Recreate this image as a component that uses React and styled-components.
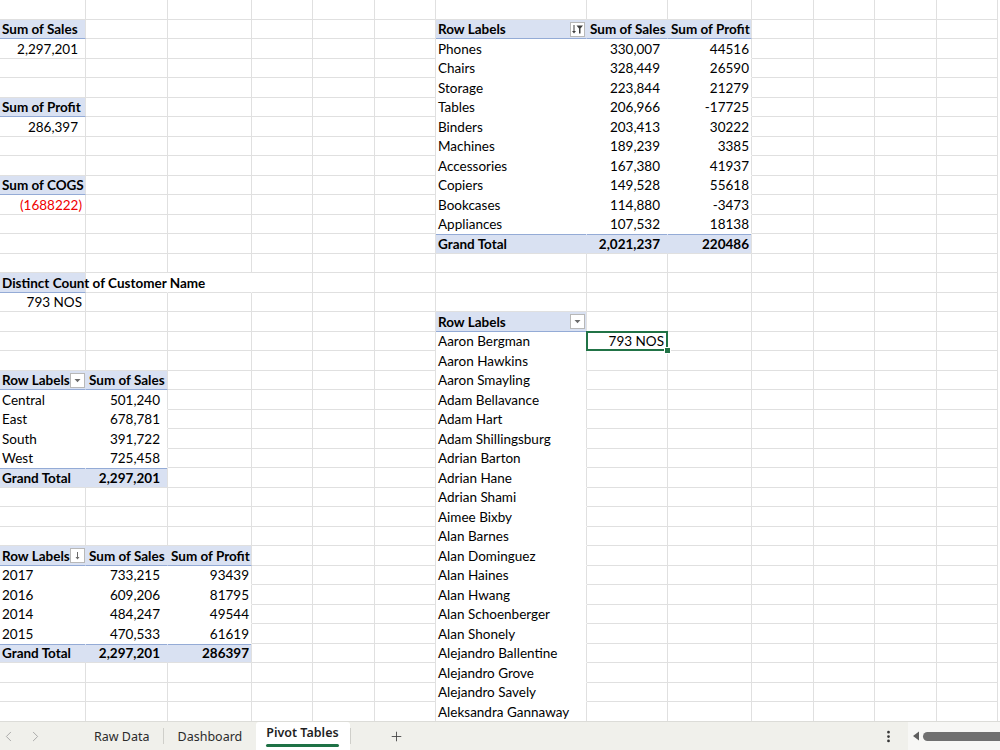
import React from "react";
import styled, { createGlobalStyle } from "styled-components";
import { ChevronLeft, ChevronRight, Plus, EllipsisVertical } from "lucide-react";

const COLS = [86, 82, 84, 61, 62, 61, 151, 81, 84, 62, 61, 62, 61];
const ROWS = 37;
const GRID = "#e0e0e0";
const FILL = "#d9e1f2";
const RULE = "#94abd6";

const GlobalStyle = createGlobalStyle`
  body {
    margin: 0;
    overflow: hidden;
    background: #fff;
    font-family: Lato, "Liberation Sans", sans-serif;
  }
`;

// cell helpers
const head = (t, o = {}) => ({ t, k: "head", ...o });
const body = (t, o = {}) => ({ t, k: "body", ...o });
const num = (t, o = {}) => ({ t, k: "body", a: "r", pr: 7, ...o });
const total = (t, o = {}) => ({ t, k: "total", ...o });

const names = [
  "Aaron Bergman",
  "Aaron Hawkins",
  "Aaron Smayling",
  "Adam Bellavance",
  "Adam Hart",
  "Adam Shillingsburg",
  "Adrian Barton",
  "Adrian Hane",
  "Adrian Shami",
  "Aimee Bixby",
  "Alan Barnes",
  "Alan Dominguez",
  "Alan Haines",
  "Alan Hwang",
  "Alan Schoenberger",
  "Alan Shonely",
  "Alejandro Ballentine",
  "Alejandro Grove",
  "Alejandro Savely",
  "Aleksandra Gannaway",
];

const categories = [
  ["Phones", "330,007", "44516"],
  ["Chairs", "328,449", "26590"],
  ["Storage", "223,844", "21279"],
  ["Tables", "206,966", "-17725"],
  ["Binders", "203,413", "30222"],
  ["Machines", "189,239", "3385"],
  ["Accessories", "167,380", "41937"],
  ["Copiers", "149,528", "55618"],
  ["Bookcases", "114,880", "-3473"],
  ["Appliances", "107,532", "18138"],
];

const regions = [
  ["Central", "501,240"],
  ["East", "678,781"],
  ["South", "391,722"],
  ["West", "725,458"],
];

const years = [
  ["2017", "733,215", "93439"],
  ["2016", "609,206", "81795"],
  ["2014", "484,247", "49544"],
  ["2015", "470,533", "61619"],
];

function buildSheet() {
  const rows = Array.from({ length: ROWS }, () => ({}));

  // single value pivots
  rows[1][0] = head("Sum of Sales", { edge: true });
  rows[2][0] = num("2,297,201", { edge: true, foot: true });
  rows[5][0] = head("Sum of Profit", { edge: true });
  rows[6][0] = num("286,397", { edge: true, foot: true });
  rows[9][0] = head("Sum of COGS", { edge: true });
  rows[10][0] = body("(1688222)", { a: "r", pr: 3, red: true, edge: true, foot: true });
  rows[14][0] = head("Distinct Count of Customer Name", { edge: true });
  rows[14][1] = { open: true };
  rows[14][2] = { open: true };
  rows[15][0] = body("793 NOS", { a: "r", pr: 3, edge: true, foot: true });

  // category pivot
  rows[1][6] = head("Row Labels", { icon: "sortFilter" });
  rows[1][7] = head("Sum of Sales", { pl: 3 });
  rows[1][8] = head("Sum of Profit", { pl: 3, edge: true });
  categories.forEach(([c, s, p], i) => {
    rows[2 + i][6] = body(c);
    rows[2 + i][7] = num(s);
    rows[2 + i][8] = body(p, { a: "r", edge: true });
  });
  rows[12][6] = total("Grand Total");
  rows[12][7] = total("2,021,237", { a: "r", pr: 7 });
  rows[12][8] = total("220486", { a: "r", edge: true });

  // customer list
  rows[16][6] = head("Row Labels", { icon: "drop", edge: true });
  names.forEach((n, i) => {
    rows[17 + i][6] = body(n, { edge: true });
  });
  rows[17][7] = { t: "793 NOS", a: "r", pr: 3, sel: true };

  // region pivot
  rows[19][0] = head("Row Labels", { icon: "drop" });
  rows[19][1] = head("Sum of Sales", { pl: 3, edge: true });
  regions.forEach(([r, s], i) => {
    rows[20 + i][0] = body(r);
    rows[20 + i][1] = num(s, { edge: true });
  });
  rows[24][0] = total("Grand Total");
  rows[24][1] = total("2,297,201", { a: "r", pr: 7, edge: true });

  // year pivot
  rows[28][0] = head("Row Labels", { icon: "sort" });
  rows[28][1] = head("Sum of Sales", { pl: 3 });
  rows[28][2] = head("Sum of Profit", { pl: 3, edge: true });
  years.forEach(([y, s, p], i) => {
    rows[29 + i][0] = body(y);
    rows[29 + i][1] = num(s);
    rows[29 + i][2] = body(p, { a: "r", edge: true });
  });
  rows[33][0] = total("Grand Total");
  rows[33][1] = total("2,297,201", { a: "r", pr: 7 });
  rows[33][2] = total("286397", { a: "r", edge: true });

  return rows;
}

function FieldButton({ kind }) {
  return (
    <Btn>
      <svg width="13" height="13" viewBox="0 0 13 13">
        {kind === "drop" && <path d="M3.5 5h6l-3 3.2z" fill="#6b6b6b" />}
        {kind === "sort" && (
          <g fill="#6b6b6b">
            <rect x="6" y="3" width="1" height="6" />
            <path d="M4.5 8h4l-2 2.5z" />
          </g>
        )}
        {kind === "sortFilter" && (
          <g fill="#404040">
            <rect x="2.5" y="2" width="1" height="7" />
            <path d="M1 8h4l-2 2.5z" />
            <path d="M5.5 2.5h6.5l-2.5 3v5h-1.5v-5z" />
          </g>
        )}
      </svg>
    </Btn>
  );
}

function SheetGrid() {
  const rows = buildSheet();
  return (
    <Grid>
      {rows.map((row, r) =>
        COLS.map((_, c) => {
          const cell = row[c] || {};
          return (
            <Cell
              key={`${r}-${c}`}
              $kind={cell.k || "plain"}
              $align={cell.a}
              $pr={cell.pr}
              $pl={cell.pl}
              $edge={cell.edge}
              $foot={cell.foot}
              $open={cell.open}
              $red={cell.red}
              $sel={cell.sel}
            >
              {cell.t && <span>{cell.t}</span>}
              {cell.icon && <FieldButton kind={cell.icon} />}
            </Cell>
          );
        })
      )}
    </Grid>
  );
}

function SheetTabs() {
  return (
    <TabBar>
      <Nav>
        <ChevronLeft size={17} strokeWidth={1.3} />
        <ChevronRight size={17} strokeWidth={1.3} />
      </Nav>
      <Tab>Raw Data</Tab>
      <Sep />
      <Tab>Dashboard</Tab>
      <ActiveTab>
        <span>Pivot Tables</span>
        <Underline />
      </ActiveTab>
      <Sep />
      <AddTab>
        <Plus size={15} strokeWidth={1.4} />
      </AddTab>
      <Spacer />
      <Kebab>
        <EllipsisVertical size={15} strokeWidth={2.4} />
      </Kebab>
      <Scroll>
        <svg width="8" height="10" viewBox="0 0 8 10">
          <path d="M1 5l6-4.5v9z" fill="#5f5f5f" />
        </svg>
        <Thumb />
      </Scroll>
    </TabBar>
  );
}

export default function App() {
  return (
    <>
      <GlobalStyle />
      <Page>
        <Sheet>
          <SheetGrid />
        </Sheet>
        <SheetTabs />
      </Page>
    </>
  );
}

const Page = styled.div`
  width: 1000px;
  height: 750px;
  display: flex;
  flex-direction: column;
  overflow: hidden;
`;

const Sheet = styled.div`
  height: 721px;
  overflow: hidden;
  flex: none;
`;

const Grid = styled.div`
  display: grid;
  grid-template-columns: ${COLS.map((w) => `${w}px`).join(" ")};
  grid-auto-rows: 19.5px;
`;

const Cell = styled.div`
  box-sizing: border-box;
  position: relative;
  display: flex;
  align-items: center;
  justify-content: ${(p) => (p.$align === "r" ? "flex-end" : "space-between")};
  padding: 1px ${(p) => p.$pr ?? 2}px 0 ${(p) => p.$pl ?? 2}px;
  font-size: 13.5px;
  white-space: nowrap;
  min-width: 0;
  color: ${(p) => (p.$red ? "#f00000" : "#000")};
  font-weight: ${(p) => (p.$kind === "head" || p.$kind === "total" ? 700 : 400)};
  background: ${(p) =>
    p.$kind === "head" || p.$kind === "total"
      ? FILL
      : p.$kind === "body"
      ? "#fff"
      : "transparent"};
  border-right: 1px solid
    ${(p) =>
      p.$edge
        ? GRID
        : p.$open
        ? "transparent"
        : p.$kind === "body"
        ? "#fff"
        : p.$kind === "head" || p.$kind === "total"
        ? FILL
        : GRID};
  border-bottom: 1px solid
    ${(p) =>
      p.$kind === "head"
        ? RULE
        : p.$kind === "body" && !p.$foot
        ? "#fff"
        : GRID};
  ${(p) => p.$kind === "total" && `box-shadow: inset 0 1px 0 ${RULE};`}
  ${(p) => p.$kind === "head" && p.$align !== "r" && "padding-right: 1px;"}

  ${(p) =>
    p.$sel &&
    `
    z-index: 2;
    &::after {
      content: "";
      position: absolute;
      left: -1px;
      top: -1px;
      right: -1px;
      bottom: -1px;
      border: 2px solid #217346;
    }
    &::before {
      content: "";
      position: absolute;
      right: -4px;
      bottom: -4px;
      width: 5px;
      height: 5px;
      background: #217346;
      border: 1px solid #fff;
      z-index: 1;
    }
  `}
`;

const Btn = styled.span`
  box-sizing: border-box;
  width: 15px;
  height: 15px;
  flex: none;
  display: inline-flex;
  align-items: center;
  justify-content: center;
  background: #fff;
  border: 1px solid #b8b8b8;
`;

const TabBar = styled.div`
  box-sizing: border-box;
  height: 29px;
  flex: none;
  display: flex;
  align-items: stretch;
  background: #f0f0eb;
  border-top: 1px solid #dcdcd8;
  font-family: "Noto Sans", "Open Sans", sans-serif;
  font-size: 12.5px;
  color: #2b2b2b;
`;

const Nav = styled.div`
  width: 80px;
  display: flex;
  align-items: center;
  gap: 10px;
  padding-left: 0;
  color: #a3a3a3;
  box-sizing: border-box;
`;

const Tab = styled.div`
  display: flex;
  align-items: center;
  padding: 0 13px 0 14px;
`;

const Sep = styled.div`
  width: 1px;
  height: 16px;
  align-self: center;
  background: #cfcfca;
`;

const ActiveTab = styled.div`
  display: flex;
  flex-direction: column;
  align-items: center;
  justify-content: flex-end;
  padding: 0 11px 0 10px;
  margin-left: 1px;
  background: #fff;
  font-weight: 600;
  color: #1f1f1f;
  border-radius: 3px 3px 0 0;
`;

const Underline = styled.div`
  align-self: stretch;
  height: 3px;
  margin: 3px 0 3px;
  background: #1e7145;
  border-radius: 2px;
`;

const AddTab = styled.div`
  display: flex;
  align-items: center;
  padding: 0 0 0 38px;
  color: #444;
`;

const Spacer = styled.div`
  flex: 1;
`;

const Kebab = styled.div`
  display: flex;
  align-items: center;
  color: #333;
  padding-right: 12px;
`;

const Scroll = styled.div`
  width: 88px;
  display: flex;
  align-items: center;
  gap: 3px;
  padding-left: 4px;
  background: #f7f7f5;
`;

const Thumb = styled.div`
  flex: 1;
  height: 9px;
  background: #707070;
  border-radius: 5px 0 0 5px;
`;
